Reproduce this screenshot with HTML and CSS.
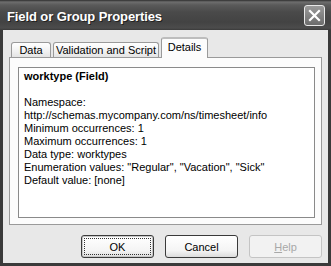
FILE: index.html
```html
<!DOCTYPE html>
<html lang="en">
<head>
  <meta charset="UTF-8">
  <title>Field or Group Properties</title>
  <link rel="stylesheet" href="styles.css">
</head>
<body>

  <div class="window">
    <div class="titlebar">
      <span class="title">Field or Group Properties</span>
      <button class="close-btn" aria-label="Close">
        <svg width="13" height="13" viewBox="0 0 13 13">
          <path d="M2 2 L11 11 M11 2 L2 11" stroke="#fff" stroke-width="2.2" stroke-linecap="square"/>
        </svg>
      </button>
    </div>

    <div class="content">
      <div class="tabs">
        <div class="tab tab-data">Data</div>
        <div class="tab tab-validation">Validation and Script</div>
        <div class="tab tab-details active">Details</div>
      </div>

      <div class="panel">
        <div class="details-box">
          <div class="details-title">worktype (Field)</div>
          <div class="blank"></div>
          <div>Namespace:</div>
          <div>http://schemas.mycompany.com/ns/timesheet/info</div>
          <div>Minimum occurrences: 1</div>
          <div>Maximum occurrences: 1</div>
          <div>Data type: worktypes</div>
          <div>Enumeration values: "Regular", "Vacation", "Sick"</div>
          <div>Default value: [none]</div>
        </div>
      </div>

      <div class="buttons">
        <button class="btn btn-default"><span class="focus">OK</span></button>
        <button class="btn">Cancel</button>
        <button class="btn" disabled><u>H</u>elp</button>
      </div>
    </div>
  </div>

</body>
</html>
```

FILE: styles.css
```css
body {
  margin: 0; padding: 0;
  background: #fff;
  font-family: 'Liberation Sans', Arial, sans-serif;
  font-size: 11px;
  color: #000;
}

.window {
  width: 331px;
  height: 266px;
  box-sizing: border-box;
  background: #3a3a3a;
  display: flex;
  flex-direction: column;
}

/* title bar */
.titlebar {
  height: 30px;
  flex: none;
  display: flex;
  align-items: center;
  justify-content: space-between;
  padding: 0 7px 0 7px;
  box-sizing: border-box;
  background: linear-gradient(#2e2e2e 0, #6e6e6e 2px, #5a5a5a 5px, #4a4a4a 12px, #434343 22px, #4c4c4c 28px, #3a3a3a 30px);
}
.title {
  color: #fff;
  font-weight: bold;
  font-size: 13px;
  letter-spacing: -0.1px;
  text-shadow: 1px 1px 0 #222;
  margin-top: 2px;
}
.close-btn {
  width: 21px; height: 21px;
  padding: 0;
  border: 1px solid #e8e8e8;
  border-radius: 3px;
  background: linear-gradient(#9a9a9a, #6c6c6c);
  display: flex;
  align-items: center;
  justify-content: center;
  margin-right: -1px;
  margin-top: 1px;
}

/* dialog body */
.content {
  flex: 1;
  margin: 0 3px 3px 3px;
  background: #e8e8e8;
  display: flex;
  flex-direction: column;
  padding: 7px 6px 0 6px;
}

.tabs {
  display: flex;
  align-items: flex-end;
  height: 20px;
  padding-left: 2px;
  position: relative;
  z-index: 1;
}
.tab {
  height: 15px;
  box-sizing: border-box;
  border: 1px solid #9a9a9a;
  border-bottom: none;
  border-radius: 3px 3px 0 0;
  background: linear-gradient(#ffffff, #f1f1f1 60%, #e4e4e4);
  text-align: center;
  line-height: 15px;
  margin-right: 2px;
}
.tab-data { width: 40px; }
.tab-validation { width: 106px; }
.tab-details { width: 47px; }
.tab.active {
  height: 21px;
  line-height: 16px;
  margin-bottom: -1px;
  background: #fcfcfc;
  border-top: 2px solid #bdbdbd;
}

.panel {
  height: 168px;
  box-sizing: border-box;
  width: 313px;
  border: 1px solid #9a9a9a;
  background: #fcfcfc;
  padding: 9px 6px 6px 8px;
}
.details-box {
  height: 100%;
  box-sizing: border-box;
  border: 1px solid #8a8a8a;
  background: #fff;
  padding: 2px 5px;
  line-height: 13px;
}
.details-title { font-weight: bold; }
.blank { height: 13px; }

/* buttons */
.buttons {
  display: flex;
  justify-content: flex-end;
  gap: 11px;
  margin-top: 10px;
  padding-right: 0;
}
.btn {
  width: 73px;
  height: 23px;
  padding: 0;
  font-family: inherit;
  font-size: 11px;
  color: #000;
  border: 1px solid #3a3a3a;
  border-radius: 3px;
  background: linear-gradient(#ffffff, #f4f4f4 70%, #dcdcdc);
  display: flex;
  align-items: center;
  justify-content: center;
}
.btn-default {
  box-shadow: inset 0 0 0 1px #c8c8c8;
}
.btn .focus {
  display: flex;
  align-items: center;
  justify-content: center;
  width: 65px;
  height: 15px;
  border: 1px dotted #333;
}
.btn:disabled {
  border-color: #c4c4c4;
  color: #a8a8a8;
  background: #f2f2f2;
}
```
